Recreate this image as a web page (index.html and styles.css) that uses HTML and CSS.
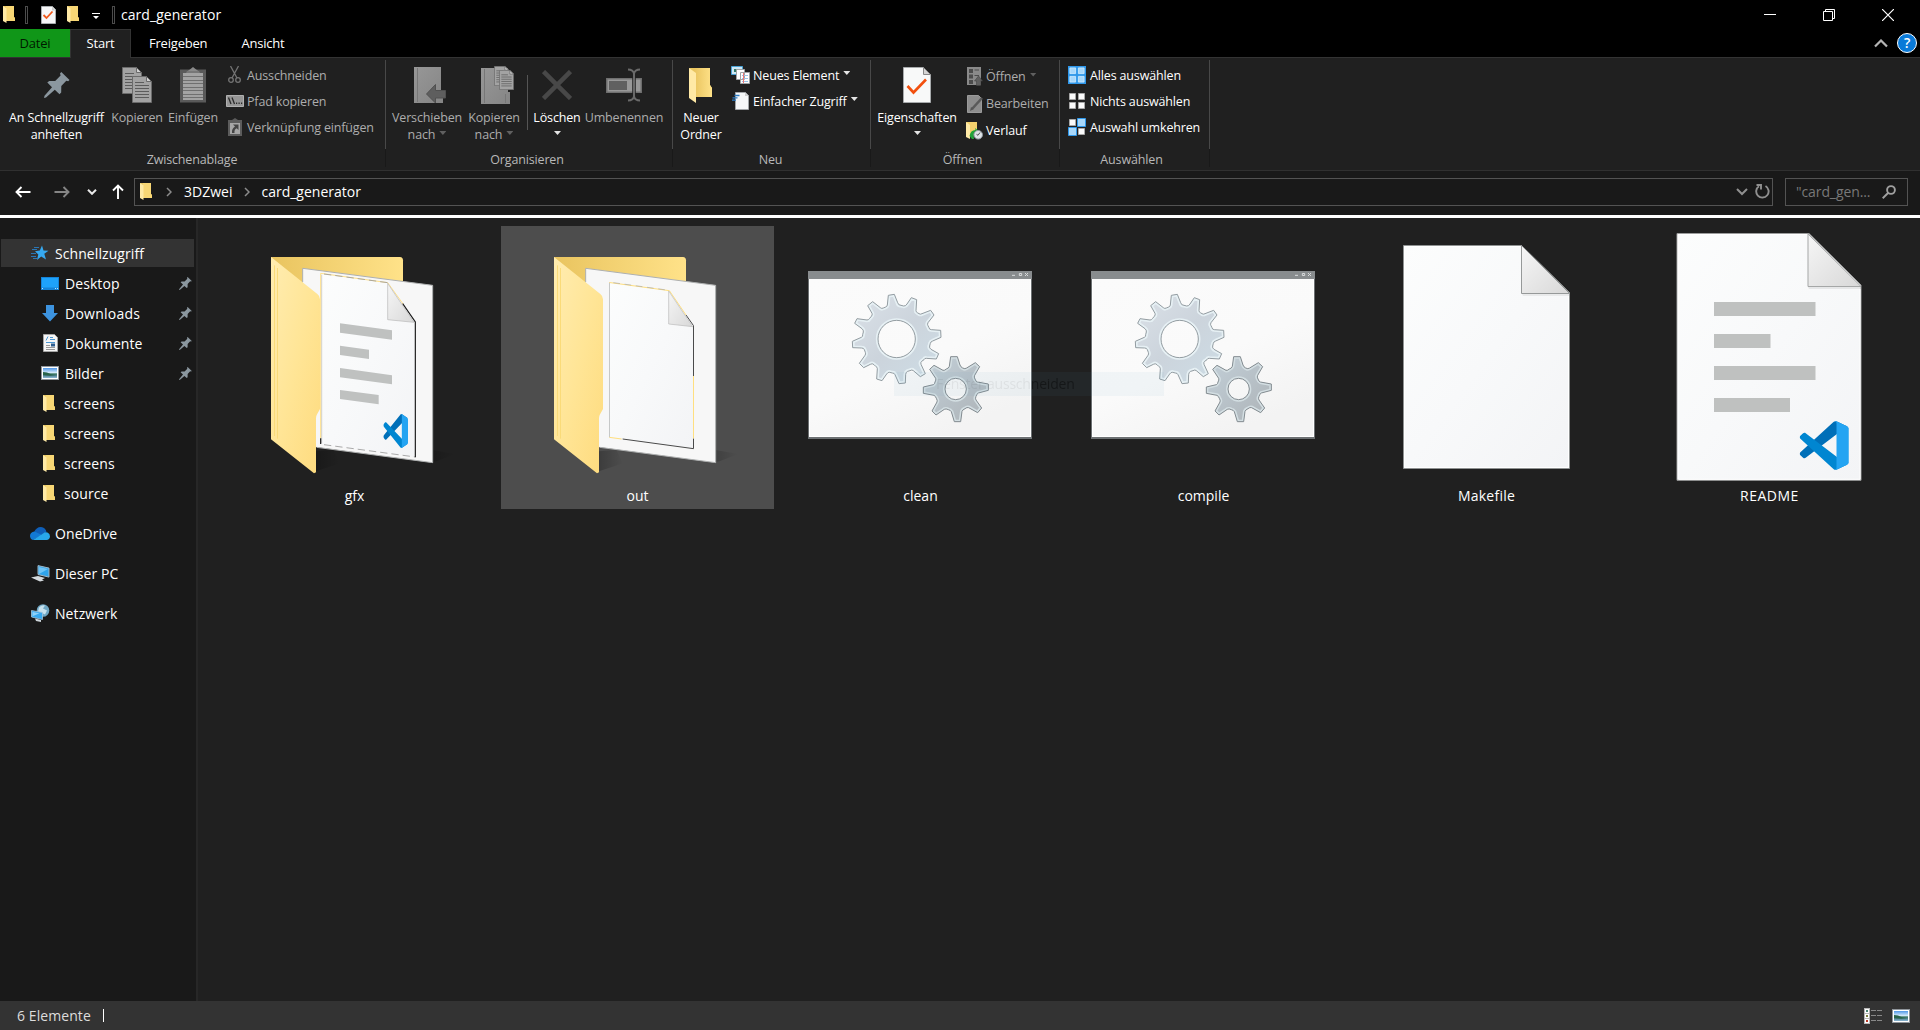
FILE: index.html
```html
<!DOCTYPE html>
<html lang="de">
<head>
<meta charset="utf-8">
<title>card_generator</title>
<link rel="stylesheet" href="styles.css">
</head>
<body>
<svg class="defs" width="0" height="0" aria-hidden="true">
  <defs>
    <linearGradient id="gFolderBack" x1="0" x2="1"><stop offset="0" stop-color="#e9c45f"/><stop offset="1" stop-color="#ffe289"/></linearGradient>
    <linearGradient id="gFolderFront" x1="0" y1="0" x2="1" y2="1"><stop offset="0" stop-color="#ffecb0"/><stop offset=".5" stop-color="#ffe596"/><stop offset="1" stop-color="#fedb7e"/></linearGradient>
    <linearGradient id="gPage" x1="0" y1="0" x2="1" y2="1"><stop offset="0" stop-color="#fcfdfd"/><stop offset=".5" stop-color="#f8f9fa"/><stop offset="1" stop-color="#f3f4f6"/></linearGradient>
    <linearGradient id="gFold" x1="0" y1="0" x2="1" y2="1"><stop offset="0" stop-color="#f6f6f6"/><stop offset="1" stop-color="#d8d8d8"/></linearGradient>
    <linearGradient id="gWin" x1="0" y1="0" x2=".6" y2="1"><stop offset="0" stop-color="#fbfbfb"/><stop offset=".6" stop-color="#fafafa"/><stop offset="1" stop-color="#f3f3f3"/></linearGradient>
    <linearGradient id="gGearA" x1="0" y1="0" x2="1" y2="1"><stop offset="0" stop-color="#dbe1e8"/><stop offset=".5" stop-color="#ccd4dc"/><stop offset="1" stop-color="#cddde6"/></linearGradient>
    <linearGradient id="gGearB" x1="0" y1="0" x2="1" y2="1"><stop offset="0" stop-color="#c3d0d9"/><stop offset="1" stop-color="#adb3b7"/></linearGradient>
    <linearGradient id="gShade" x1="0" x2="1"><stop offset="0" stop-color="#000" stop-opacity=".22"/><stop offset="1" stop-color="#000" stop-opacity="0"/></linearGradient>
    <linearGradient id="gSky" x1="0" y1="0" x2="0" y2="1"><stop offset="0" stop-color="#4f97e8"/><stop offset=".45" stop-color="#cfe6fa"/><stop offset=".6" stop-color="#3f7a62"/><stop offset=".75" stop-color="#4d7f8c"/><stop offset="1" stop-color="#8fb9d8"/></linearGradient>
    <linearGradient id="gGrey" x1="0" y1="0" x2="1" y2="1"><stop offset="0" stop-color="#979797"/><stop offset="1" stop-color="#858585"/></linearGradient>

    <symbol id="folder" viewBox="0 0 12 17"><path fill="#ecc95f" d="M0 0h11v11l1 1v3H3z"/><path fill="#f8d775" d="M3 0h8v11l1 1v3H3z"/><path fill="#ffeaa6" d="M0 0l3.500 2.200V17L0 15z"/></symbol>
    <symbol id="pin" viewBox="0 0 26 26"><path fill="#8b979f" d="M17.300 0 25.500 8 24.200 9.200 22.300 8.700 17.300 14 17.200 20.500 15.500 22.200 10.800 17.800 2 25.500 0 26 .5 23.800 8 15.200 3.300 10.500 5.200 9 11.200 9 16.600 3.500 16 1.400z"/></symbol>
    <symbol id="vscode" viewBox="0 0 100 100"><path fill="#006fb8" d="M96.460 10.800 75.860.88C73.470-.27 70.620.21 68.750 2.080L1.300 63.580C-.52 65.240-.51 68.090 1.300 69.750L6.810 74.750C8.300 76.100 10.530 76.200 12.130 74.990L93.360 13.370C96.090 11.300 100 13.250 100 16.670z"/><path fill="#0086d1" d="M96.460 89.200 75.860 99.120C73.470 100.270 70.620 99.790 68.750 97.920L1.300 36.420C-.52 34.760-.51 31.910 1.300 30.250L6.810 25.250C8.300 23.900 10.530 23.800 12.130 25.010L93.360 86.630C96.090 88.700 100 86.750 100 83.330z"/><path fill="#24a4f2" d="M75.860 99.130C73.470 100.270 70.620 99.790 68.750 97.920 71.060 100.220 75 98.590 75 95.330V4.670C75 1.410 71.060-.22 68.750 2.080 70.620.21 73.470-.27 75.860.87L96.460 10.780C98.620 11.820 100 14.010 100 16.410V83.590C100 85.990 98.620 88.180 96.460 89.220z"/></symbol>
    <symbol id="photo" viewBox="0 0 18 14"><path fill="#8f959b" d="M0 0h18v14H0z"/><path fill="#fff" d="M1 1h16v12H1z"/><path fill="url(#gSky)" d="M2 2h14v10H2z"/><path fill="#28634a" d="M2 6l4 .6 4 1.600 5 .8-6 .8L2 9z"/></symbol>
    <symbol id="copypage" viewBox="0 0 20 27"><path fill="#a3a3a3" stroke="#6b6b6b" d="M.5.5h14l5 5v21H.5z"/><path fill="#d0d0d0" stroke="#6b6b6b" d="M14.500.5v5h5z"/><path stroke="#5c5c5c" d="M3 6.500h9M3 9.500h14M3 12.500h14M3 15.500h14M3 18.500h14M3 21.500h14"/></symbol>

    <g id="bigFolder">
      <path fill="url(#gFolderBack)" d="M93 111H480q9 1 9 10V260H93z"/>
      <path fill="url(#gShade)" d="M228 694V754L300 730 280 690z"/>
      <path fill="url(#gShade)" d="M560 690V728L590 724 645 702 578 690z"/>
      <path fill="#f7f7f7" d="M188 145 578 196V728L188 676z"/>
      <path fill="none" stroke="#aeb0b0" stroke-width="3" d="M188 186V145L578 196V728L230 682"/>
    </g>
    <g id="bigFlap">
      <path fill="url(#gFolderFront)" d="M93 111 232 222Q240 228 240 238V567L230 585Q228 590 228 596V757L222 760 93 658z"/>
      <path stroke="#fadb79" stroke-width="3" d="M103.500 136V648M112.500 144V656"/>
    </g>
    <path id="gearA" d="M295 136 313 133 323 158Q325 166 333 166L341 168Q347 169 351 162L364 143 380 149 378 182Q378 186 382 188L387 191Q391 194 396 191L422 181 432 195 414 218Q411 223 414 227L417 233Q418 239 424 239L452 241 453 262 428 273Q422 275 421 280L419 288Q417 294 423 298L446 311 439 327 409 325Q404 324 402 329L395 334Q391 337 393 343L406 371 391 380 370 362Q366 358 360 362L353 364Q348 366 347 373L346 399 327 401 315 374Q313 369 307 369L299 367Q294 366 290 372L276 392 260 387 262 356Q262 351 257 349L252 344Q247 339 241 343L221 353 208 340 225 316Q228 312 226 307L223 299Q221 294 215 294L188 293 187 274 214 262Q219 260 218 254L220 246Q221 240 216 236L194 220 201 206 231 210Q236 210 238 206L244 199Q248 195 246 190L233 167 248 155 271 173Q275 177 280 174L287 171Q291 170 292 165zM320 211A56 56 0 1 0 320 323A56 56 0 1 0 320 211z"/>
    <path id="gearB" d="M482 320 502 320 510 345Q512 351 518 354 525 358 530 354L556 338 569 350 554 376Q551 381 555 387 557 394 562 396L595 402V421L565 429Q560 432 558 439 555 445 558 450L575 474 563 488 536 473Q531 471 525 476 518 479 516 484L512 515H493L484 485Q481 480 475 479 468 475 463 478L438 495 426 483 441 456Q443 451 439 445 437 439 432 436L400 430V411L430 404Q435 401 435 396 439 390 437 385L419 358 432 346 459 361Q464 362 469 357 476 355 478 349zM497 385A32 32 0 1 0 497 449A32 32 0 1 0 497 385z"/>
    <clipPath id="clipA"><use href="#gearA" clip-rule="evenodd"/></clipPath>
    <clipPath id="clipB"><use href="#gearB" clip-rule="evenodd"/></clipPath>
    <symbol id="batch" viewBox="-18 -72 819 768">
      <path fill="#6c7072" d="M54 63H726V567H54z"/><path fill="#888c8e" d="M54 63H726V87H54z"/>
      <path fill="#fff" d="M57 87H723V561H57z"/><path fill="url(#gWin)" d="M60 87H720V558H60z"/>
      <path stroke="#d8dadb" stroke-width="3" fill="none" d="M666 76H675M688 70.500H695V76.500H688zM705 69 714 78M714 69 705 78"/>
      <use href="#gearA" fill="url(#gGearA)" fill-rule="evenodd"/>
      <use href="#gearA" fill="none" stroke="#e6f0f4" stroke-width="13" clip-path="url(#clipA)"/>
      <use href="#gearA" fill="none" stroke="#949da2" stroke-width="3"/>
      <use href="#gearB" fill="url(#gGearB)" fill-rule="evenodd"/>
      <use href="#gearB" fill="none" stroke="#d3dee2" stroke-width="12" clip-path="url(#clipB)"/>
      <use href="#gearB" fill="none" stroke="#848c91" stroke-width="3"/>
    </symbol>
  </defs>
</svg>

<div class="window">
  <header class="titlebar">
    <svg class="tb-folder" width="12" height="17"><use href="#folder"/></svg>
    <i class="tb-sep first"></i>
    <svg class="tb-props" width="15" height="18" viewBox="0 0 15 18"><path fill="#f6f7f8" stroke="#a9adb0" d="M.5.5h11l3 3v14H.5z"/><path fill="#ccc" d="M11 .5v4h3.500z"/><path fill="none" stroke="#f0591c" stroke-width="1.800" d="M2.500 9l3 3 6-6.500"/></svg>
    <svg class="tb-new" width="12" height="17"><use href="#folder"/></svg>
    <svg class="tb-more" width="8" height="7" viewBox="0 0 8 7"><path fill="#fff" d="M0 0h8v1H0zM1 3h6L4 6z"/></svg>
    <i class="tb-sep second"></i>
    <span class="title">card_generator</span>
    <div class="winctl">
      <svg width="12" height="12" viewBox="0 0 12 12"><path stroke="#fff" d="M0 5.500h12"/></svg>
      <svg width="12" height="12" viewBox="0 0 12 12"><path stroke="#fff" fill="none" d="M.5 2.500h9v9h-9zM2.500 2V.5h9v9H10"/></svg>
      <svg width="12" height="12" viewBox="0 0 12 12"><path stroke="#fff" stroke-width="1.200" d="M0 0l12 12M12 0L0 12"/></svg>
    </div>
  </header>

  <nav class="tabs">
    <span class="tab file">Datei</span>
    <span class="tab active">Start</span>
    <span class="tab share">Freigeben</span>
    <span class="tab view">Ansicht</span>
    <div class="tabs-right">
      <svg width="14" height="9" viewBox="0 0 14 9"><path fill="none" stroke="#b4b4b4" stroke-width="2.200" d="M1 7.500l6-6 6 6"/></svg>
      <span class="help">?</span>
    </div>
  </nav>

  <section class="ribbon">
    <div class="group g-clip">
      <div class="tools">
        <div class="big w-pin"><span class="pic"><svg width="26" height="26"><use href="#pin"/></svg></span>An Schnellzugriff<br>anheften</div>
        <div class="big w-copy dim"><span class="pic"><svg width="30" height="36" viewBox="0 0 30 36"><use href="#copypage" width="20" height="27"/><use href="#copypage" x="10" y="9" width="20" height="27"/></svg></span>Kopieren</div>
        <div class="big w-paste dim"><span class="pic"><svg width="26" height="36" viewBox="0 0 26 36"><path fill="#5a5a5a" d="M0 2.500h26v33H0z"/><path fill="#8a8a8a" d="M7 4.500 10.500 2 13 0l2.500 2L19 4.500V7H7z"/><path fill="#a3a3a3" d="M3 6h20v27H3z"/><path fill="#777" d="M7 4h12l1 2H6z"/><path stroke="#707070" d="M3 9.500h20M3 13.500h20M3 16.500h20M3 20.500h20M3 23.500h20M3 27.500h20M3 30.500h20"/></svg></span>Einfügen</div>
        <div class="small-col">
          <div class="small dim"><span class="ic"><svg width="13" height="18" viewBox="0 0 13 18"><g fill="none" stroke="#747474" stroke-width="1.300"><path d="M2.500 0 9 12M10.500 0 4 12"/><circle cx="3" cy="14" r="2.300"/><circle cx="10" cy="14" r="2.300"/></g></svg></span>Ausschneiden</div>
          <div class="small dim"><span class="ic"><svg width="18" height="12" viewBox="0 0 18 12"><path fill="#969696" stroke="#b0b0b0" d="M.5.5h17v11H.5z"/><path stroke="#2a2a2a" stroke-width="1.300" d="M2.500 2.500 5 9M6 2.500 8.500 9"/><path fill="#2a2a2a" d="M10 7.500h1.200V9H10zM12.500 7.500h1.200V9h-1.200zM15 7.500h1.200V9H15z"/></svg></span>Pfad kopieren</div>
          <div class="small dim"><span class="ic"><svg width="14" height="18" viewBox="0 0 14 18"><path fill="#5c5c5c" d="M0 2h4l3-2 3 2h4v16H0z"/><path fill="#a6a6a6" d="M2 5h10v11H2z"/><path fill="#444" d="M5 6.500h5.500V12L8.700 10.200Q6 11.500 6.500 15H4q-.5-4.500 3-6.500z"/></svg></span>Verknüpfung einfügen</div>
        </div>
      </div>
      <div class="group-name">Zwischenablage</div>
    </div>

    <div class="group g-org">
      <div class="tools">
        <div class="big w-move dim"><span class="pic"><svg class="nudge-r" width="32" height="36" viewBox="0 0 32 36"><path fill="url(#gGrey)" d="M0 0h27v24h2v12H0z"/><path stroke="#777" d="M3.500 1v34"/><path fill="#5e5e5e" stroke="#505050" d="M12.500 27 21.500 17.500V23.500H31.500V31H21.500V36z"/></svg></span>Verschieben<br>nach <i class="caret"></i></div>
        <div class="big w-copyto dim"><span class="pic"><svg class="nudge-r" width="33" height="38" viewBox="0 0 33 38"><path fill="url(#gGrey)" d="M0 2h27v24h2v12H0z"/><path stroke="#777" d="M3.500 3v34M24.500 28v9"/><use href="#copypage" x="13" y="0" width="15" height="20"/><use href="#copypage" x="18" y="4" width="15" height="20"/></svg></span>Kopieren<br>nach <i class="caret"></i></div>
        <i class="vline"></i>
        <div class="big w-del"><span class="pic"><svg width="30" height="30" viewBox="0 0 30 30"><path stroke="#484848" stroke-width="4.500" d="M1.500 1.500l27 27M28.500 1.500l-27 27"/></svg></span>Löschen<br><i class="caret"></i></div>
        <div class="big w-ren dim"><span class="pic"><svg width="36" height="34" viewBox="0 0 36 34"><path fill="#999" stroke="#707070" stroke-width="1.500" d="M.8 10.800h34.400v13.400H.8z"/><path fill="#606060" d="M3 13h18v9H3z"/><path fill="none" stroke="#202020" stroke-width="3.500" d="M28 3v28"/><path fill="none" stroke="#6a6a6a" stroke-width="2" d="M22 1.500q5 0 6 4 1-4 6-4M28 5v24M22 32.500q5 0 6-4 1 4 6 4"/></svg></span>Umbenennen</div>
      </div>
      <div class="group-name">Organisieren</div>
    </div>

    <div class="group g-new">
      <div class="tools">
        <div class="big w-newf"><span class="pic"><svg width="24" height="35" viewBox="0 0 24 35"><path fill="#e9c660" d="M0 0h21v17l2 3v9H7z"/><path fill="url(#gFolderBack)" d="M5 0h16v17l2 3v9H7z"/><path fill="#ffe9a5" d="M0 0l7 5v30L0 30z"/></svg></span>Neuer<br>Ordner</div>
        <div class="small-col">
          <div class="small"><span class="ic"><svg width="19" height="18" viewBox="0 0 19 18"><path fill="#cfe8f6" stroke="#4aa3d6" d="M.5.5h11v8H.5z"/><path fill="#327b66" d="M3 3h4v3H3z"/><path fill="#fff" stroke="#a0a4a6" d="M5.500 3.500h8v10h-8zM9.500 6.500h9v11h-9z"/><path stroke="#9bc3e6" d="M11 9.500h6M11 12.500h6M11 15.500h6"/><path stroke="#e77" d="M12.500 7v10"/></svg></span>Neues Element <i class="caret"></i></div>
          <div class="small"><span class="ic"><svg width="18" height="18" viewBox="0 0 18 18"><path fill="#f6f7f8" stroke="#a2a5a8" d="M3.500.5h10l3 3v14h-13z"/><path fill="#ccc" d="M13 .5v3.500h3.500z"/><path stroke="#2d7cc4" stroke-width="1.300" d="M2.500 3.500h5M.5 5.800h5M0 8.200h4"/></svg></span>Einfacher Zugriff <i class="caret"></i></div>
        </div>
      </div>
      <div class="group-name">Neu</div>
    </div>

    <div class="group g-open">
      <div class="tools">
        <div class="big w-prop"><span class="pic"><svg width="28" height="36" viewBox="0 0 28 36"><path fill="#f8f9f9" stroke="#a7aaac" d="M.5.5h20l7 7v28H.5z"/><path fill="#d4d4d4" stroke="#888" d="M20.500.5v7h7z"/><path fill="none" stroke="#f2500f" stroke-width="2.600" d="M4.500 19l6 6.500L23 12.500"/></svg></span>Eigenschaften<br><i class="caret"></i></div>
        <div class="small-col wide">
          <div class="small dim"><span class="ic"><svg width="16" height="19" viewBox="0 0 16 19"><path fill="#8a8a8a" d="M0 0h14v18H0z"/><path fill="#4c4c4c" d="M2 2h4v4H2zM2 7.500h4v4H2zM2 13h4v4H2zM7.500 2.500H12v1H7.500zM7.500 8H12v1H7.500z"/><path fill="#606060" stroke="#444" stroke-width=".6" d="M11.500 9l4 5H13.500v4.500h-4V14H7.500z"/></svg></span>Öffnen <i class="caret"></i></div>
          <div class="small dim"><span class="ic"><svg width="16" height="18" viewBox="0 0 16 18"><path fill="#8d8d8d" stroke="#9a9a9a" d="M.5.5h11l3 3v14H.5z"/><path stroke="#5a5a5a" stroke-width="2.600" d="M15 3 5 14"/><path fill="#555" d="M3 16l1-4 2.500 2.200z"/></svg></span>Bearbeiten</div>
          <div class="small"><span class="ic"><svg width="17" height="18" viewBox="0 0 17 18"><path fill="#f3d06c" d="M0 0h11v13H4z"/><path fill="#ffeaa6" d="M0 0l4 3v14l-4-2z"/><path fill="#21a23a" d="M3.500 14Q4.500 8 9.500 8L9 6l4 3-3 3.500L9.800 11Q7 12 8 17H6z"/><circle cx="12.200" cy="12.800" r="4.300" fill="#dfe4e8" stroke="#8e979e"/><path fill="none" stroke="#555" d="M14 10.500l-2 2.800-1.500-1"/></svg></span>Verlauf</div>
        </div>
      </div>
      <div class="group-name">Öffnen</div>
    </div>

    <div class="group g-sel">
      <div class="tools">
        <div class="small-col">
          <div class="small"><span class="ic"><svg width="18" height="18" viewBox="0 0 18 18"><path fill="#2e97ea" d="M0 0h18v18H0z"/><path fill="#a8d8fb" stroke="#d4edfe" stroke-width=".8" d="M1.900 1.900h5.700v5.700H1.900zM10.400 1.900h5.700v5.700h-5.700zM1.900 10.400h5.700v5.700H1.900zM10.400 10.400h5.700v5.700h-5.700z"/></svg></span>Alles auswählen</div>
          <div class="small"><span class="ic"><svg width="18" height="18" viewBox="0 0 18 18"><path fill="#fafafa" stroke="#a8a8a8" d="M1.500 1.500h6v6h-6zM10.500 1.500h6v6h-6zM1.500 10.500h6v6h-6zM10.500 10.500h6v6h-6z"/></svg></span>Nichts auswählen</div>
          <div class="small"><span class="ic"><svg width="18" height="18" viewBox="0 0 18 18"><path fill="#fafafa" stroke="#a8a8a8" d="M1.500 1.500h6v6h-6zM10.500 10.500h6v6h-6z"/><path fill="#a8d8fb" stroke="#2e97ea" d="M9.500.5h8v8h-8zM.5 9.500h8v8h-8z"/></svg></span>Auswahl umkehren</div>
        </div>
      </div>
      <div class="group-name">Auswählen</div>
    </div>
  </section>

  <section class="addressbar">
    <svg class="nav-back" width="16" height="12" viewBox="0 0 16 12"><path fill="none" stroke="#fff" stroke-width="1.900" d="M15.500 6H1.500M6.500 1l-5 5 5 5"/></svg>
    <svg class="nav-fwd" width="16" height="12" viewBox="0 0 16 12"><path fill="none" stroke="#858585" stroke-width="1.900" d="M.5 6h14M9.500 1l5 5-5 5"/></svg>
    <svg class="nav-hist" width="10" height="6" viewBox="0 0 10 6"><path fill="none" stroke="#e8e8e8" stroke-width="2" d="M1 .8l4 4 4-4"/></svg>
    <svg class="nav-up" width="12" height="15" viewBox="0 0 12 15"><path fill="none" stroke="#fff" stroke-width="1.900" d="M6 15V1.500M1 6.500l5-5 5 5"/></svg>
    <div class="path">
      <svg class="p-folder" width="12" height="17"><use href="#folder"/></svg>
      <svg class="chev c1" width="6" height="10" viewBox="0 0 6 10"><path fill="none" stroke="#8c8c8c" stroke-width="1.500" d="M1 1l4 4-4 4"/></svg>
      <span class="crumb first">3DZwei</span>
      <svg class="chev c2" width="6" height="10" viewBox="0 0 6 10"><path fill="none" stroke="#8c8c8c" stroke-width="1.500" d="M1 1l4 4-4 4"/></svg>
      <span class="crumb">card_generator</span>
      <div class="path-end">
        <svg width="12" height="8" viewBox="0 0 12 8"><path fill="none" stroke="#909090" stroke-width="2" d="M1 1l5 5 5-5"/></svg>
        <svg width="15" height="15" viewBox="0 0 15 15"><path fill="none" stroke="#909090" stroke-width="1.900" d="M10.500 2A6.200 6.200 0 1 1 4 2.200M1.500 1H6v4.500"/></svg>
      </div>
    </div>
    <div class="search"><span>"card_gen...</span><svg width="14" height="14" viewBox="0 0 14 14"><g fill="none" stroke="#a0a0a0" stroke-width="1.900"><circle cx="9" cy="5" r="3.900"/><path d="M6.300 7.800.7 13.300"/></g></svg></div>
  </section>

  <main class="body">
    <aside class="sidebar">
      <div class="item top selected"><svg width="18" height="16" viewBox="0 0 18 16"><path stroke="#2a76b4" d="M3 2.500h5M1 4.500h5M0 8.500h5M0 11.500h5M2 13.500h4"/><path fill="#36a9f0" d="M11 .5l1.500 5 5 .3-4.200 3L15 14.500l-4.800-3L6 15l1.300-5.500L4 6.200l4.800-.7z"/></svg><span>Schnellzugriff</span></div>
      <div class="item"><svg width="18" height="13" viewBox="0 0 18 13"><path fill="#1583d8" d="M0 0h18v13H0z"/><path fill="#1ea2fb" d="M1 1h16v9.500H1z"/><path stroke="#bfe2fb" stroke-dasharray="1 1" d="M1 11.500h2M14 11.500h3"/></svg><span>Desktop</span><svg class="pin" width="13" height="13"><use href="#pin"/></svg></div>
      <div class="item"><svg width="16" height="17" viewBox="0 0 16 17"><path fill="#3d94e0" d="M4 0h8v8h4l-8 8.500L0 8h4z"/></svg><span class="loose">Downloads</span><svg class="pin" width="13" height="13"><use href="#pin"/></svg></div>
      <div class="item"><svg width="15" height="18" viewBox="0 0 15 18"><path fill="#f6f6f6" stroke="#a6a6a6" d="M.5.5h11l3 3v14H.5z"/><path stroke="#4b97d3" d="M7 3.500h3M7 5.500h5M3 8.500h9M3 6.500l2-4"/><path stroke="#999" d="M3 11.500h4M3 13.500h9M3 15.500h9"/><path fill="#2f5e8f" d="M8 9.500h4v3H8z"/></svg><span>Dokumente</span><svg class="pin" width="13" height="13"><use href="#pin"/></svg></div>
      <div class="item"><svg width="18" height="14"><use href="#photo"/></svg><span>Bilder</span><svg class="pin" width="13" height="13"><use href="#pin"/></svg></div>
      <div class="item sub"><svg class="f" width="12" height="17"><use href="#folder"/></svg><span>screens</span></div>
      <div class="item sub"><svg class="f" width="12" height="17"><use href="#folder"/></svg><span>screens</span></div>
      <div class="item sub"><svg class="f" width="12" height="17"><use href="#folder"/></svg><span>screens</span></div>
      <div class="item sub"><svg class="f" width="12" height="17"><use href="#folder"/></svg><span>source</span></div>
      <div class="item top apart"><svg width="20" height="13" viewBox="0 0 20 13"><path fill="#0f5fb8" d="M4 5.500Q6 0 11 0q4.500.3 5.500 5L9 9z"/><path fill="#1279d4" d="M0 9q0-4 4.500-4.500L12 8l-9 5Q.3 12.500 0 9z"/><path fill="#28a8ea" d="M3 13 13 6.500Q15 4.500 17.500 5.500 20 6.500 20 9.500q-.3 3.300-3.500 3.500z"/></svg><span>OneDrive</span></div>
      <div class="item top apart"><svg width="19" height="17" viewBox="0 0 19 17"><path fill="#2fa4ec" stroke="#9db6c6" d="M7 .6l11 2.500v9L7 9.500z"/><path fill="#6fc4f7" d="M8 2l9 2-9 5z"/><path fill="#d5dade" d="M0 12.500l7-1.500 7 2-3 1.500 2 1-4 1z"/></svg><span>Dieser PC</span></div>
      <div class="item top apart"><svg width="19" height="18" viewBox="0 0 19 18"><circle cx="12" cy="6.500" r="6.300" fill="#6fa7c4"/><path fill="#c8e2ee" d="M8 3.500q3-3 6-2l-2 3 4 2-2 4-4-2-3-1z"/><path fill="#37a9ef" stroke="#a6c7dc" stroke-width=".8" d="M.5 6.500l11 2v7L.5 13z"/><path fill="#8ed2fa" d="M1.500 8l7 1.300-7 3z"/><path fill="#cdd5da" d="M4 14.500l6 1.500v2l-5-1z"/></svg><span>Netzwerk</span></div>
    </aside>

    <section class="files">
      <div class="tile">
        <svg width="273" height="256" viewBox="-66 18 819 768">
          <use href="#bigFolder"/><use href="#bigFlap"/>
          <path fill="url(#gPage)" d="M242 160 443 188 526 306V711L242 672z"/>
          <path fill="none" stroke="#b8baba" stroke-width="2" d="M245 164V670"/>
          <path fill="none" stroke="#ffe08a" stroke-width="3" d="M242 655V160L443 188 490 253"/>
          <path fill="none" stroke="#9a9a9a" stroke-width="2.500" stroke-dasharray="22 12" d="M252 162 443 188M252 674 526 711"/>
          <path fill="none" stroke="#191919" stroke-width="3.500" d="M242 655V672M488 251 526 306V712"/>
          <path fill="url(#gFold)" stroke="#b6b6b6" stroke-width="2" d="M443 190V299L522 307z"/>
          <path fill="#bfc1c0" d="M300 310 456 331V359L300 338zM300 377 387 389V417L300 405zM300 444 456 466V493L300 472zM300 510 416 525V553L300 537z"/>
          <svg x="430" y="582" width="74" height="102" preserveAspectRatio="none" viewBox="0 0 100 100"><use href="#vscode" width="100" height="100"/></svg>
        </svg>
        <span>gfx</span>
      </div>
      <div class="tile hover">
        <svg width="273" height="256" viewBox="33 18 819 768">
          <g transform="translate(99 0)"><use href="#bigFolder"/><use href="#bigFlap"/></g>
          <path fill="url(#gPage)" d="M358 187 538 212 611 317V686L358 652z"/>
          <path fill="none" stroke="#c6c8c8" stroke-width="3" d="M358.500 187V652"/>
          <path fill="none" stroke="#ffdf80" stroke-width="3" d="M358 187.500 538 212 588 285M610.500 468V656M358 652 395 657"/>
          <path fill="none" stroke="#a9a9a9" stroke-width="2" stroke-dasharray="20 14" d="M370 188 530 210"/>
          <path fill="none" stroke="#4a4a4a" stroke-width="3" d="M588 285 610.500 317V468M610.500 656V686L398 657"/>
          <path fill="url(#gFold)" stroke="#b9b9b9" stroke-width="2" d="M536 213V312L608 320z"/>
        </svg>
        <span>out</span>
      </div>
      <div class="tile"><svg width="273" height="256"><use href="#batch"/></svg><span>clean</span></div>
      <div class="tile"><svg width="273" height="256"><use href="#batch"/></svg><span>compile</span></div>
      <div class="tile">
        <svg width="273" height="256" viewBox="1350 226 273 256">
          <path fill="url(#gPage)" stroke="#8f9292" d="M1403.500 245.500H1521.500L1569.500 292.500V468.500H1403.500z"/>
          <path fill="none" stroke="#fff" d="M1404.500 467.500V246.500H1520.500M1405 467.500H1568.500V295"/>
          <path fill="#e9eaeb" d="M1522 294h47v2h-46z"/>
          <path fill="url(#gFold)" stroke="#969999" d="M1521.500 245.500V293.500H1569.500z"/>
        </svg>
        <span class="loose">Makefile</span>
      </div>
      <div class="tile">
        <svg width="273" height="256" viewBox="1633 226 273 256">
          <path fill="url(#gPage)" stroke="#9c9d9d" d="M1677 233.500H1809L1861 285V480.300H1677z"/>
          <path fill="none" stroke="#fff" d="M1678.200 479.300V234.500H1807M1679 479.300H1860V289"/>
          <path fill="#e6e7e8" d="M1808 287h52v2h-51z"/>
          <path fill="url(#gFold)" stroke="#a5a7a7" d="M1808 234V286.500H1861z"/>
          <path fill="#bfc1c0" d="M1714 302h101.500v14H1714zM1714 334h56.500v14H1714zM1714 366h101.500v14H1714zM1714 398h76v14H1714z"/>
          <use href="#vscode" x="1799.500" y="421" width="49.500" height="49"/>
        </svg>
        <span class="looser">README</span>
      </div>
      <div class="ghost"><span>Fenster ausschneiden</span></div>
    </section>
  </main>

  <footer class="status">
    <span>6 Elemente</span><i></i>
    <div class="views">
      <svg width="18" height="16" viewBox="0 0 18 16"><path fill="#b9b9b9" d="M0 0h6v16H0z"/><path fill="#fff" d="M1 1h4v4H1zM1 6h4v4H1zM1 11h4v4H1z"/><path fill="#4b8474" d="M2 2h2v2H2z"/><path fill="#7a7f3f" d="M2 7h2v2H2z"/><path fill="#b73826" d="M2 12h2v2H2z"/><path stroke="#888" d="M7 2.500h5M13 2.500h5M7 7.500h5M13 7.500h5M7 12.500h5M13 12.500h5"/></svg>
      <svg width="18" height="14"><use href="#photo"/></svg>
    </div>
  </footer>
</div>
</body>
</html>
```
FILE: styles.css
```css
* { box-sizing: border-box; }
body { margin: 0; background: #202020; color: #fff; font-family: "Open Sans", "Noto Sans", sans-serif; font-size: 14px; }
svg { display: block; flex: none; }
i { font-style: normal; }
.defs { position: absolute; }
.window { display: flex; flex-direction: column; width: 1920px; height: 1030px; overflow: hidden; white-space: nowrap; }

/* title bar */
.titlebar { display: flex; align-items: center; height: 29px; padding-left: 3px; background: #000; }
.tb-sep { width: 3px; height: 18px; border: 1px solid #4c4c4c; }
.tb-sep.first { margin-left: 10px; }
.tb-props { margin-left: 13px; }
.tb-new { margin-left: 11px; }
.tb-more { margin: 4px 12px 0 13px; }
.title { margin-left: 6px; font-size: 14px; letter-spacing: .05px; }
.winctl { display: flex; gap: 47px; margin: 0 26px 0 auto; }

/* tabs */
.tabs { display: flex; height: 28px; background: #000; font-size: 13px; line-height: 28px; letter-spacing: -.2px; }
.tab { text-align: center; }
.file { width: 70px; background: #109618; color: #001a00; }
.active { width: 61px; height: 29px; background: #202020; border: 1px solid #333; border-bottom: 0; line-height: 27px; z-index: 1; }
.share { margin-left: 18px; }
.view { margin-left: 34px; }
.tabs-right { display: flex; align-items: center; gap: 9px; margin: 0 3px 0 auto; }
.help { width: 20px; height: 20px; border: 1px solid #fff; border-radius: 50%; background: #0a7ad8; text-align: center; line-height: 18px; font-size: 14px; font-weight: 600; }

/* ribbon */
.ribbon { display: flex; height: 114px; background: #202020; border-top: 1px solid #333; border-bottom: 1px solid #303030; font-size: 12.500px; letter-spacing: -.15px; }
.group { position: relative; padding-top: 7px; }
.group::after { content: ""; position: absolute; right: 0; top: 2px; width: 1px; height: 107px; background: linear-gradient(#484848 0 89px, #191919 89px); }
.g-clip { width: 386px; padding-left: 4px; }
.g-org { width: 287px; padding-left: 1px; }
.g-new { width: 198px; padding-left: 3px; }
.g-open { width: 189px; }
.g-sel { width: 150px; padding-left: 3px; }
.tools { display: flex; height: 85px; }
.group-name { text-align: center; line-height: 20px; color: #b8b8b8; padding-right: 6px; }
.g-sel .group-name { padding-right: 10px; }
.big { text-align: center; line-height: 17px; }
.pic { display: flex; height: 44px; align-items: center; justify-content: center; padding-bottom: 4px; }
.dim { color: #adadad; }
.w-pin { width: 105px; }
.w-copy { width: 56px; }
.w-paste { width: 56px; }
.w-move { width: 80px; }
.nudge-r { margin-left: 6px; }
.w-copyto { width: 54px; }
.vline { width: 1px; height: 55px; margin: 10px 4px 0 6px; background: #555; }
.w-del { width: 50px; }
.w-ren { width: 84px; }
.w-newf { width: 50px; }
.w-prop { width: 92px; }
.caret { display: inline-block; width: 7px; height: 4px; margin-left: 1px; vertical-align: 4px; background: #e4e4e4; clip-path: polygon(0 0, 100% 0, 50% 100%); }
.dim .caret { background: #606060; }
.small-col { display: flex; flex-direction: column; margin-left: 4px; }
.g-new .small-col { margin-left: 5px; }
.small { display: flex; align-items: center; height: 26px; margin-top: -3px; margin-bottom: 3px; white-space: pre; }
.small .caret { margin: -4px 0 0 1px; }
.small-col.wide { margin-left: 2px; }
.wide .small { height: 27px; }
.wide .small:first-child { margin-top: -2px; }
.ic { display: flex; width: 19px; margin-right: 3px; justify-content: center; }
.wide .ic { margin-right: 2px; }
.g-sel .ic { margin-right: 4px; }

/* address bar */
.addressbar { display: flex; align-items: center; height: 47px; padding: 0 12px 3px 15px; background: #191919; border-bottom: 3px solid #fff; }
.nav-fwd { margin-left: 23px; }
.nav-hist { margin-left: 17px; }
.nav-up { margin-left: 15px; }
.path { display: flex; align-items: center; flex: 1; height: 28px; margin-left: 10px; padding-left: 5px; border: 1px solid #535353; }
.c1 { margin: 0 12px 0 14px; }
.c2 { margin: 0 11px 0 12px; }
.path-end { display: flex; align-items: center; gap: 7px; margin: 0 2px 0 auto; }
.search { display: flex; align-items: center; justify-content: space-between; width: 123px; height: 28px; margin-left: 12px; padding: 0 11px 0 10px; border: 1px solid #535353; color: #787878; }
.search span { letter-spacing: -.1px; }

/* body */
.body { display: flex; flex: 1; min-height: 0; }
.sidebar { width: 198px; padding: 20px 0 0 1px; background: #191919; border-right: 2px solid #272727; letter-spacing: .08px; }
.item { display: grid; grid-template-columns: 18px 1fr 16px; align-items: center; height: 30px; padding-left: 40px; }
.item span { margin-left: 6px; }
.item.sub span { margin-left: 5px; }
.item > svg:first-child { justify-self: center; }
.item > svg.f:first-child { justify-self: start; margin-left: 2px; }
.item.top { padding-left: 30px; }
.item.selected { width: 193px; background: linear-gradient(transparent 1px, #333 1px 29px, transparent 29px); }
.item.apart { margin-top: 10px; }
.pin { margin-left: -1px; }
.loose, .sidebar .loose { letter-spacing: .25px; }
.looser { letter-spacing: .5px; }
.files { position: relative; display: flex; flex: 1; gap: 10px; padding: 8px 0 0 20px; background: #202020; }
.tile { width: 273px; height: 283px; flex: none; text-align: center; line-height: 28px; }
.tile.hover { background: #4d4d4d; }
.tile span { display: block; }

/* fading menu entry over the tiles */
.ghost { position: absolute; left: 696px; top: 154px; width: 270px; height: 24px; padding-left: 42px; line-height: 24px; background: rgba(80, 150, 190, .06); }
.ghost span { display: inline-block; letter-spacing: -.2px; color: transparent; background: linear-gradient(90deg, rgba(0, 0, 0, .06) 96px, rgba(0, 0, 0, .4) 96px); background-clip: text; -webkit-background-clip: text; }

/* status */
.status { display: flex; align-items: center; height: 29px; padding: 0 10px 0 17px; background: #333; color: #ddd; letter-spacing: .08px; }
.status i { width: 1px; height: 13px; margin-left: 12px; background: #fff; }
.views { display: flex; align-items: center; gap: 10px; margin-left: auto; }
```
